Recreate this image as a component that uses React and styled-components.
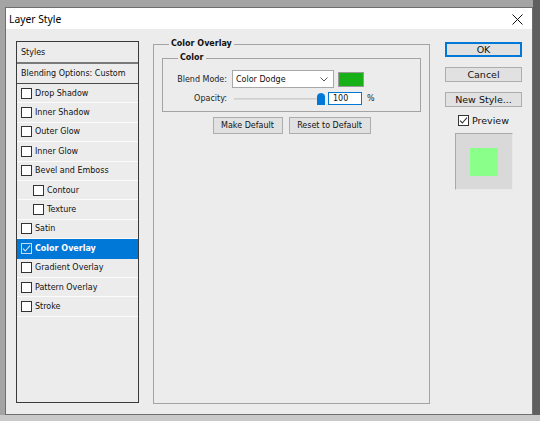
import React from "react";
import styled, { createGlobalStyle } from "styled-components";

const Global = createGlobalStyle`
  html, body { margin: 0; padding: 0; }
  body {
    width: 540px;
    height: 421px;
    overflow: hidden;
    font-family: "DejaVu Sans", Verdana, sans-serif;
    background:
      linear-gradient(to bottom, transparent 415px, #c9c9c9 415px),
      linear-gradient(to right, #a4a4a4 533px, #5f5f5f 533px);
  }
  * { box-sizing: border-box; }
`;

const Window = styled.div`
  margin: 7px 0 0 5px;
  width: 528px;
  height: 408px;
  border: 1px solid #6e6e6e;
  background: #ececec;
  display: flex;
  flex-direction: column;
`;

const TitleBar = styled.div`
  height: 21px;
  flex: none;
  background: #ffffff;
  display: flex;
  align-items: center;
  justify-content: space-between;
  padding: 1px 9px 0 3px;
  font-family: "Noto Sans", "Open Sans", sans-serif;
  font-size: 10.3px;
  color: #000;
`;

const CloseBtn = styled.svg`
  width: 11px;
  height: 11px;
  display: block;
`;

const Body = styled.div`
  display: flex;
  align-items: flex-start;
  padding: 9px 0 0 10px;
`;

const StylesPanel = styled.div`
  margin-top: 3px;
  width: 123px;
  height: 362px;
  border: 1px solid #3a3a3a;
  display: flex;
  flex-direction: column;
`;

const PanelHeader = styled.div`
  height: 22px;
  padding: 0 0 0 4px;
  display: flex;
  align-items: center;
  font-size: 8px;
  color: #111;
  border-bottom: 2px solid #7a7a7a;
`;

const BlendRow = styled.div`
  height: 20px;
  padding-left: 4px;
  display: flex;
  align-items: center;
  font-size: 8px;
  color: #111;
  border-bottom: 1px solid #4a4a4a;
`;

const StyleRow = styled.div`
  height: 19.4px;
  flex: none;
  display: flex;
  align-items: center;
  gap: 3px;
  padding-left: ${(p) => (p.$indent ? 16 : 4)}px;
  font-size: 8px;
  font-weight: ${(p) => (p.$selected ? "bold" : "normal")};
  color: ${(p) => (p.$selected ? "#ffffff" : "#111")};
  background: ${(p) => (p.$selected ? "#0078d7" : "transparent")};
  border-bottom: 1px solid ${(p) => (p.$selected ? "#0078d7" : "#fbfbfb")};
`;

const Box = styled.span`
  width: 11px;
  height: 11px;
  flex: none;
  border: 1px solid ${(p) => (p.$light ? "#c7dcf2" : "#333")};
  background: ${(p) => (p.$light ? "transparent" : "#fff")};
  display: flex;
  align-items: center;
  justify-content: center;
`;

const Check = ({ color }) => (
  <svg width="9" height="9" viewBox="0 0 9 9">
    <path d="M1 4.6 L3.3 7 L8 1.6" fill="none" stroke={color} strokeWidth="1.1" />
  </svg>
);

const CheckBox = ({ checked, light }) => (
  <Box $light={light}>{checked && <Check color={light ? "#d6e4f2" : "#333"} />}</Box>
);

const Group = styled.fieldset`
  margin: ${(p) => p.$margin};
  padding: ${(p) => p.$padding};
  border: 1px solid #a3a3a3;
  min-width: 0;
  ${(p) => (p.$height ? `height: ${p.$height}px;` : "")}
  ${(p) => (p.$width ? `width: ${p.$width}px; flex: none;` : "")}
`;

const Legend = styled.legend`
  font-size: 8px;
  font-weight: bold;
  line-height: 12px;
  padding: 0 2px;
  margin-left: ${(p) => p.$offset}px;
  color: #111;
`;

const FieldGrid = styled.div`
  display: grid;
  grid-template-columns: 64px auto;
  column-gap: 5px;
  row-gap: 4px;
  align-items: center;
`;

const Label = styled.span`
  text-align: right;
  font-size: 8px;
  color: #222;
`;

const Controls = styled.div`
  display: flex;
  align-items: center;
  gap: ${(p) => p.$gap}px;
`;

const Select = styled.div`
  width: 102px;
  height: 18px;
  background: #fff;
  border: 1px solid #a8a8a8;
  display: flex;
  align-items: center;
  justify-content: space-between;
  padding: 0 5px 0 3px;
  font-size: 8px;
  color: #111;
`;

const Swatch = styled.div`
  width: 26px;
  height: 15px;
  background: #17b117;
  border: 1px solid #9a9a9a;
`;

const SliderWrap = styled.div`
  width: 93px;
  height: 13px;
  display: flex;
  align-items: center;
  padding-left: 2px;
`;

const Track = styled.div`
  flex: 1;
  height: 2px;
  background: #dadada;
  border-top: 1px solid #cfcfcf;
`;

const NumInput = styled.div`
  width: 34px;
  height: 13px;
  border: 1px solid #0078d7;
  background: #fff;
  font-size: 8px;
  display: flex;
  align-items: center;
  padding-left: 4px;
  color: #111;
`;

const Percent = styled.span`
  font-size: 8px;
  margin-left: 2px;
  color: #222;
`;

const ButtonRow = styled.div`
  display: flex;
  justify-content: center;
  gap: 6px;
  margin-top: 5px;
`;

const Button = styled.div`
  width: ${(p) => p.$w}px;
  height: ${(p) => p.$h}px;
  background: #e1e1e1;
  border: 1px solid ${(p) => (p.$default ? "#0078d7" : "#adadad")};
  box-shadow: ${(p) => (p.$default ? "inset 0 0 0 1px #0078d7" : "none")};
  display: flex;
  align-items: center;
  justify-content: center;
  font-size: ${(p) => p.$fs}px;
  color: #111;
`;

const RightCol = styled.div`
  margin: 4px 0 0 15px;
  width: 77px;
  display: flex;
  flex-direction: column;
  align-items: center;
  gap: 10px;
`;

const PreviewCheck = styled.div`
  margin-top: -2px;
  display: flex;
  align-items: center;
  gap: 3px;
  font-size: 9.5px;
  color: #111;
`;

const PreviewBox = styled.div`
  margin-top: -3px;
  width: 58px;
  height: 57px;
  background: #d9d9d9;
  border-top: 1px solid #a9a9a9;
  border-left: 1px solid #a9a9a9;
  border-right: 1px solid #e8e8e8;
  border-bottom: 1px solid #e8e8e8;
  display: flex;
  align-items: center;
  justify-content: center;
`;

const PreviewSwatch = styled.div`
  width: 28px;
  height: 28px;
  background: #8aff8a;
`;

const styles = [
  { name: "Drop Shadow" },
  { name: "Inner Shadow" },
  { name: "Outer Glow" },
  { name: "Inner Glow" },
  { name: "Bevel and Emboss" },
  { name: "Contour", indent: true },
  { name: "Texture", indent: true },
  { name: "Satin" },
  { name: "Color Overlay", checked: true, selected: true },
  { name: "Gradient Overlay" },
  { name: "Pattern Overlay" },
  { name: "Stroke" },
];

export default function App() {
  return (
    <>
      <Global />
      <Window>
        <TitleBar>
          <span>Layer Style</span>
          <CloseBtn viewBox="0 0 11 11">
            <path d="M0.5 0.5 L10.5 10.5 M10.5 0.5 L0.5 10.5" stroke="#111" strokeWidth="1" />
          </CloseBtn>
        </TitleBar>
        <Body>
          <StylesPanel>
            <PanelHeader>Styles</PanelHeader>
            <BlendRow>Blending Options: Custom</BlendRow>
            {styles.map((s) => (
              <StyleRow key={s.name} $indent={s.indent} $selected={s.selected}>
                <CheckBox checked={s.checked} light={s.selected} />
                {s.name}
              </StyleRow>
            ))}
          </StylesPanel>

          <Group $margin="0 0 0 14px" $padding="2px 8px 0" $height={366} $width={277}>
            <Legend $offset={7}>Color Overlay</Legend>
            <Group $margin="0" $padding="6px 0 6px 0">
              <Legend $offset={15}>Color</Legend>
              <FieldGrid>
                <Label>Blend Mode:</Label>
                <Controls $gap={4}>
                  <Select>
                    <span>Color Dodge</span>
                    <svg width="8" height="5" viewBox="0 0 8 5">
                      <path d="M0.5 0.5 L4 4 L7.5 0.5" fill="none" stroke="#555" strokeWidth="1" />
                    </svg>
                  </Select>
                  <Swatch />
                </Controls>
                <Label>Opacity:</Label>
                <Controls $gap={3}>
                  <SliderWrap>
                    <Track />
                    <svg width="8" height="12" viewBox="0 0 8 12" style={{ marginLeft: -2 }}>
                      <path d="M0 3.5 Q0 1.5 2 0.5 L4 0 L6 0.5 Q8 1.5 8 3.5 L8 12 L0 12 Z" fill="#0078d7" />
                    </svg>
                  </SliderWrap>
                  <NumInput>100</NumInput>
                  <Percent>%</Percent>
                </Controls>
              </FieldGrid>
            </Group>
            <ButtonRow>
              <Button $w={70} $h={17} $fs={8}>Make Default</Button>
              <Button $w={82} $h={17} $fs={8}>Reset to Default</Button>
            </ButtonRow>
          </Group>

          <RightCol>
            <Button $w={77} $h={15} $fs={9.5} $default>OK</Button>
            <Button $w={77} $h={15} $fs={9.5}>Cancel</Button>
            <Button $w={77} $h={15} $fs={9.5}>New Style...</Button>
            <PreviewCheck>
              <CheckBox checked />
              Preview
            </PreviewCheck>
            <PreviewBox>
              <PreviewSwatch />
            </PreviewBox>
          </RightCol>
        </Body>
      </Window>
    </>
  );
}
